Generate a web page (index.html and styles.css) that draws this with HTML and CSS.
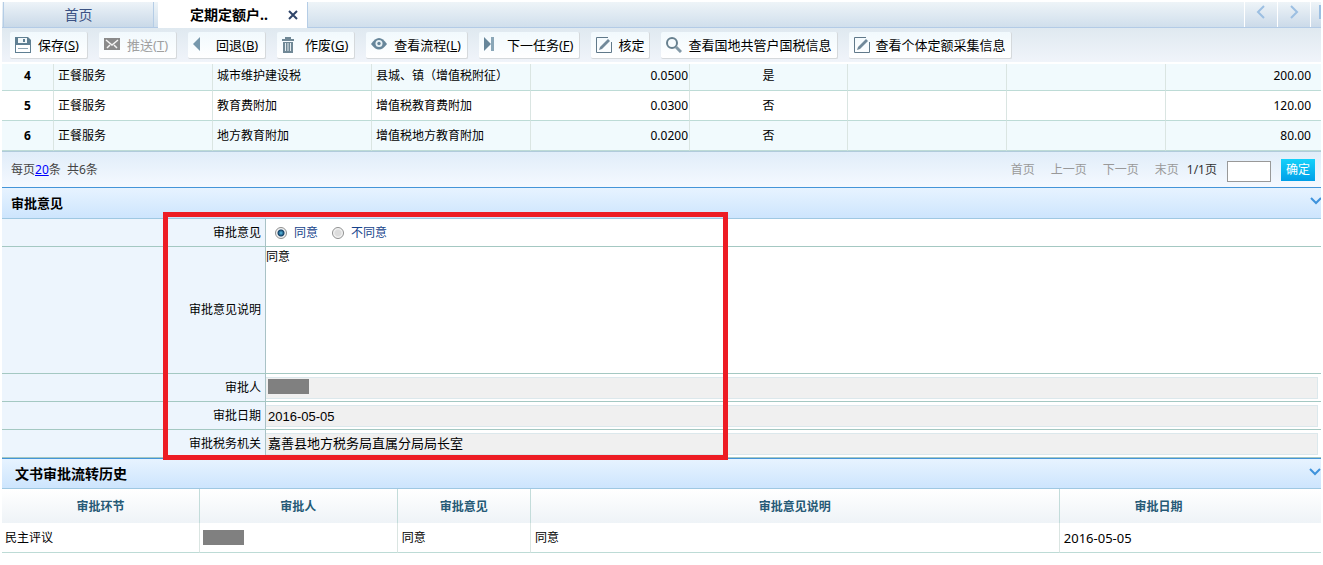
FILE: index.html
```html
<!DOCTYPE html>
<html lang="zh-CN">
<head>
<meta charset="utf-8">
<title>定期定额户</title>
<link rel="stylesheet" href="styles.css">
</head>
<body>
<nav class="tabs">
  <button class="tab" type="button">首页</button>
  <div class="tab tab-active">
    <span>定期定额户..</span>
    <button class="tab-close" type="button" aria-label="关闭"><svg width="10" height="10" viewBox="0 0 10 10"><path d="M1 1L9 9M9 1L1 9" stroke="#2f4468" stroke-width="2"/></svg></button>
  </div>
  <div class="tab-nav">
    <button type="button" aria-label="向左"><svg width="10" height="14" viewBox="0 0 10 14"><path d="M8 1L2 7L8 13" fill="none" stroke="#9cbfe2" stroke-width="2"/></svg></button>
    <button type="button" aria-label="向右"><svg width="10" height="14" viewBox="0 0 10 14"><path d="M2 1L8 7L2 13" fill="none" stroke="#9cbfe2" stroke-width="2"/></svg></button>
    <button class="cut" type="button" aria-label="窗口"><svg width="14" height="14" viewBox="0 0 14 14"><path d="M1 1H13V13H1ZM1 4H13" fill="none" stroke="#9cbfe2" stroke-width="2"/></svg></button>
  </div>
</nav>

<div class="toolbar">
  <button class="tool" type="button"><svg class="icon" viewBox="0 0 16 16"><path d="M0 0H13L16 3V16H0Z" fill="#5f7f92"/><path d="M3 1H12V6H3Z" fill="#f3f8fa"/><path d="M8 2H10V5H8Z" fill="#5f7f92"/><path d="M1 8H15V15H1Z" fill="#fff"/><path d="M3 11H13V12H3Z" fill="#8fa6b4"/></svg><span>保存(<u>S</u>)</span></button>
  <button class="tool" type="button" disabled><svg class="icon icon-up" viewBox="0 0 16 16"><path d="M0 2H16V14H0Z" fill="#8a8a8a"/><path d="M2 4L8 9L14 4M3 12L6 9M13 12L10 9" fill="none" stroke="#f4f4f4" stroke-width="1.5"/></svg><span>推送(<u>T</u>)</span></button>
  <button class="tool" type="button"><svg class="icon icon-up" viewBox="0 0 16 16"><path d="M7 1V15L0 8Z" fill="#7798ac"/></svg><span>回退(<u>B</u>)</span></button>
  <button class="tool" type="button"><svg class="icon" viewBox="0 0 16 16"><path d="M0 3H12M4 2V1H8V2" fill="none" stroke="#708896" stroke-width="2"/><path d="M1 5H11V16H1Z" fill="#708896"/><path d="M3.5 6V14M6 6V14M8.500 6V14" stroke="#e4ecf0" stroke-width="1"/></svg><span>作废(<u>G</u>)</span></button>
  <button class="tool" type="button"><svg class="icon icon-up" viewBox="0 0 16 16"><path d="M0 8Q8-4 16 8Q8 19 0 8Z" fill="#67869a"/><circle cx="8" cy="7.500" r="3.500" fill="#e9f2f6"/><circle cx="8" cy="7.500" r="1.700" fill="#67869a"/></svg><span>查看流程(<u>L</u>)</span></button>
  <button class="tool" type="button"><svg class="icon icon-up" viewBox="0 0 16 16"><path d="M0 1L7 8L0 15Z" fill="#67869a"/><path d="M7 1H10V15H7Z" fill="#8ba7b8"/></svg><span>下一任务(<u>F</u>)</span></button>
  <button class="tool tool-plain" type="button"><svg class="icon" viewBox="0 0 16 16"><path d="M12 .5H.5V15.500H15.500V5" fill="none" stroke="#60798a"/><path d="M3 13L4 10L12 2L14 4L6 12Z" fill="#71899a"/></svg><span>核定</span></button>
  <button class="tool tool-plain" type="button"><svg class="icon" viewBox="0 0 16 16"><circle cx="6" cy="6" r="5" fill="none" stroke="#67808f" stroke-width="2"/><path d="M10 10L15 15" stroke="#8198a6" stroke-width="3"/></svg><span>查看国地共管户国税信息</span></button>
  <button class="tool tool-plain" type="button"><svg class="icon" viewBox="0 0 16 16"><path d="M12 .5H.5V15.500H15.500V5" fill="none" stroke="#60798a"/><path d="M3 13L4 10L12 2L14 4L6 12Z" fill="#71899a"/></svg><span>查看个体定额采集信息</span></button>
</div>

<table class="grid taxes">
  <colgroup><col class="c-no"><col><col><col><col><col class="c-flag"><col><col><col class="c-rest"></colgroup>
  <tbody>
    <tr><th scope="row">4</th><td>正餐服务</td><td>城市维护建设税</td><td>县城、镇（增值税附征）</td><td class="rate">0.0500</td><td class="mid">是</td><td></td><td></td><td class="sum">200.00</td></tr>
    <tr><th scope="row">5</th><td>正餐服务</td><td>教育费附加</td><td>增值税教育费附加</td><td class="rate">0.0300</td><td class="mid">否</td><td></td><td></td><td class="sum">120.00</td></tr>
    <tr><th scope="row">6</th><td>正餐服务</td><td>地方教育附加</td><td>增值税地方教育附加</td><td class="rate">0.0200</td><td class="mid">否</td><td></td><td></td><td class="sum">80.00</td></tr>
  </tbody>
</table>

<div class="pager">
  <span class="pager-size">每页<a href="#">20</a>条&nbsp; 共6条</span>
  <span class="pager-off">首页</span>
  <span class="pager-off">上一页</span>
  <span class="pager-off">下一页</span>
  <span class="pager-off">末页</span>
  <label class="pager-now" for="page">1/1页</label>
  <input class="pager-input" id="page" type="text">
  <button class="pager-go" type="button">确定</button>
</div>

<section class="opinion">
  <h2 class="bar"><span>审批意见</span><svg class="fold" width="11" height="8" viewBox="0 0 11 8"><path d="M1 1L6 6L11 1" fill="none" stroke="#3f93dc" stroke-width="2"/></svg></h2>
  <form class="form">
    <div class="row">
      <span class="label">审批意见</span>
      <div class="field radios">
        <input type="radio" name="op" id="yes" checked><label for="yes">同意</label>
        <input type="radio" name="op" id="no"><label for="no">不同意</label>
      </div>
    </div>
    <div class="row">
      <label class="label" for="note">审批意见说明</label>
      <div class="field"><textarea class="note" id="note">同意</textarea></div>
    </div>
    <div class="row">
      <span class="label">审批人</span>
      <div class="field boxed"><div class="box box-top"><span class="mask"></span></div></div>
    </div>
    <div class="row">
      <label class="label" for="date">审批日期</label>
      <div class="field boxed"><input class="box" id="date" type="text" value="2016-05-05" readonly></div>
    </div>
    <div class="row">
      <label class="label" for="org">审批税务机关</label>
      <div class="field boxed"><input class="box box-top" id="org" type="text" value="嘉善县地方税务局直属分局局长室" readonly></div>
    </div>
    <div class="frame"></div>
  </form>
</section>

<section>
  <h2 class="bar bar-large"><span>文书审批流转历史</span><svg class="fold" width="12" height="8" viewBox="0 0 12 8"><path d="M1 1L6 6L11 1" fill="none" stroke="#3f93dc" stroke-width="2"/></svg></h2>
  <table class="grid history">
    <colgroup><col class="h-step"><col class="h-step"><col class="h-op"><col class="h-note"><col></colgroup>
    <thead><tr><th>审批环节</th><th>审批人</th><th>审批意见</th><th>审批意见说明</th><th>审批日期</th></tr></thead>
    <tbody><tr><td>民主评议</td><td class="masked"><span class="mask"></span></td><td>同意</td><td>同意</td><td class="date">2016-05-05</td></tr></tbody>
  </table>
</section>
</body>
</html>
```

FILE: styles.css
```css
* { box-sizing: border-box; }

body {
  margin: 2px 2px 0;
  background: #fff;
  color: #000;
  font: 12px/18px "Noto Sans", "Noto Sans CJK SC", sans-serif;
  overflow-x: hidden;
}

button, input, textarea { margin: 0; padding: 0; border: 0; font: inherit; color: inherit; border-radius: 0; }
button { background: none; white-space: nowrap; }
svg { display: block; flex: none; }

/* tabs */
.tabs {
  display: flex;
  height: 26px;
  border-bottom: 1px solid #b3cbe6;
  background: linear-gradient(#eef4f8, #d0dfec);
}
.tab {
  width: 151px;
  margin-left: 1px;
  font-size: 14px;
  color: #3b5284;
  border: solid #b5cde6;
  border-width: 0 1px;
  background: linear-gradient(#edf3f8, #c9d9e8);
}
.tab-active {
  display: flex;
  align-items: center;
  justify-content: space-between;
  width: 150px;
  height: 26px;
  margin-left: 4px;
  padding: 0 9px 0 32px;
  border-left: 0;
  background: #fff;
  color: #000;
  font-weight: bold;
}
.tab-close { display: flex; }
.tab-nav { display: flex; margin-left: auto; }
.tab-nav button {
  display: flex;
  justify-content: center;
  width: 33px;
  padding-top: 3px;
  border-left: 1px solid #fff;
  background: linear-gradient(#eef4f8, #cbdae9);
}
.tab-nav .cut { width: 11px; padding-left: 8px; justify-content: flex-start; overflow: hidden; }

/* toolbar */
.toolbar {
  display: flex;
  gap: 11px;
  height: 36px;
  padding: 4px 8px;
  border-bottom: 2px solid #fff;
  background: linear-gradient(#dfe9f0, #f0f4fa);
}
.tool {
  display: flex;
  align-items: center;
  gap: 7px;
  min-width: 78px;
  height: 27px;
  padding: 0 6px 0 5px;
  border: solid #d5d9dc;
  border-width: 0 1px 1px 0;
  border-radius: 2px;
  background: linear-gradient(#f1f9fd, #fff);
  font-size: 13px;
}
.tool-plain { min-width: 0; gap: 6px; padding-right: 5px; }
.tool:disabled { color: #a0a0a0; }
.icon { width: 16px; height: 16px; }
.icon-up { margin-bottom: 3px; }

/* tables */
.grid { width: 100%; table-layout: fixed; border-collapse: separate; border-spacing: 0; }
.grid td, .grid th { padding: 0 4px; border: solid #dae5e2; border-width: 0 1px 1px 0; border-bottom-color: #bddbd6; }
.grid tr > :last-child { border-right: 0; }
.grid td { text-align: left; white-space: nowrap; }
.taxes col { width: 159px; }
.taxes .c-no { width: 52px; }
.taxes .c-flag { width: 158px; }
.taxes .c-rest { width: auto; }
.taxes td, .taxes th { height: 30px; }
.taxes tr:first-child > * { height: 27px; padding-bottom: 2px; }
.taxes tr:nth-child(odd) { background: #f1fafd; }
.taxes .rate { text-align: right; padding-right: 1px; }
.taxes .mid { text-align: center; }
.taxes .sum { text-align: right; padding-right: 10px; }

/* pager */
.pager {
  display: flex;
  align-items: center;
  height: 36px;
  padding: 0 6px 0 9px;
  border-top: 1px solid #b0cbdb;
  background: linear-gradient(#e0edf9, #f5f9ff);
  color: #444;
}
.pager-size { margin-right: auto; }
.pager-size a { color: #00f; }
.pager-off { margin-right: 16px; color: #999; }
.pager-off + .pager-now { margin-left: -8px; color: #333; }
.pager-input { width: 44px; height: 21px; margin: 3px 10px 0; border: 1px solid #999; background: #fff; }
.pager-go { width: 34px; height: 22px; background: linear-gradient(#14d1fa, #009fe8); color: #fff; }

/* section bars */
.bar {
  display: flex;
  align-items: center;
  justify-content: space-between;
  height: 32px;
  margin: 0;
  padding: 0 0 0 9px;
  border-top: 1px solid #4595d8;
  border-bottom: 1px solid #9fc8e2;
  background: linear-gradient(#e7f3ff, #cde5fd);
  font-size: 13px;
}
.bar-large { height: 31px; padding-left: 13px; font-size: 14px; }
.fold { margin-bottom: 4px; }

/* form */
.form { position: relative; }
.row { display: flex; height: 28px; border-bottom: 1px solid #a4c8c2; }
.row:has(.note) { height: 127px; }
.label {
  display: flex;
  align-items: center;
  justify-content: flex-end;
  width: 264px;
  padding-right: 4px;
  border-right: 1px solid #a9c2c6;
  background: #edf5fd;
}
.field { flex: 1; display: flex; min-width: 0; }
.radios { align-items: center; padding-left: 9px; color: #15428b; }
.radios label { margin: 0 14px 0 7px; }
.radios input {
  appearance: none;
  width: 12px;
  height: 12px;
  border: 1px solid #8e8f8f;
  border-radius: 50%;
  background: radial-gradient(#dcdcdc 40%, #f6f6f6 65%);
}
.radios input:checked { background: radial-gradient(circle, #5cc3ea 0, #123f66 3px, #f2f2f2 4px); }
.note { flex: 1; padding-top: 1px; resize: none; outline: 0; background: #fff; }
.boxed { padding: 3px 3px 2px 0; }
.box {
  flex: 1;
  display: flex;
  align-items: center;
  min-width: 0;
  padding: 0 2px;
  border: 1px solid #dce8ec;
  border-left: 0;
  outline: 0;
  background: #f0f0f0;
  font: 13px "Liberation Sans", "Noto Sans CJK SC", sans-serif;
}
.box-top { padding-bottom: 4px; }
.mask { display: block; width: 41px; height: 15px; background: #808080; }

/* highlight around the approval fields */
.frame {
  position: absolute;
  top: -7px;
  left: 161px;
  bottom: -2px;
  width: 565px;
  border: 5px solid #ed1c24;
  pointer-events: none;
}

/* history */
.h-step { width: 15%; }
.h-op { width: 10.1%; }
.h-note { width: 40.1%; }
.history th {
  height: 34px;
  padding-top: 2px;
  border-right-color: #c3dcda;
  border-bottom: 0;
  background: linear-gradient(#fff, #eef3f7);
  color: #265a76;
}
.history th:last-child { padding-right: 68px; }
.history td { height: 30px; }
.history td:first-child, .history .masked { padding-left: 3px; }
.history .date { font-size: 13px; }
```
